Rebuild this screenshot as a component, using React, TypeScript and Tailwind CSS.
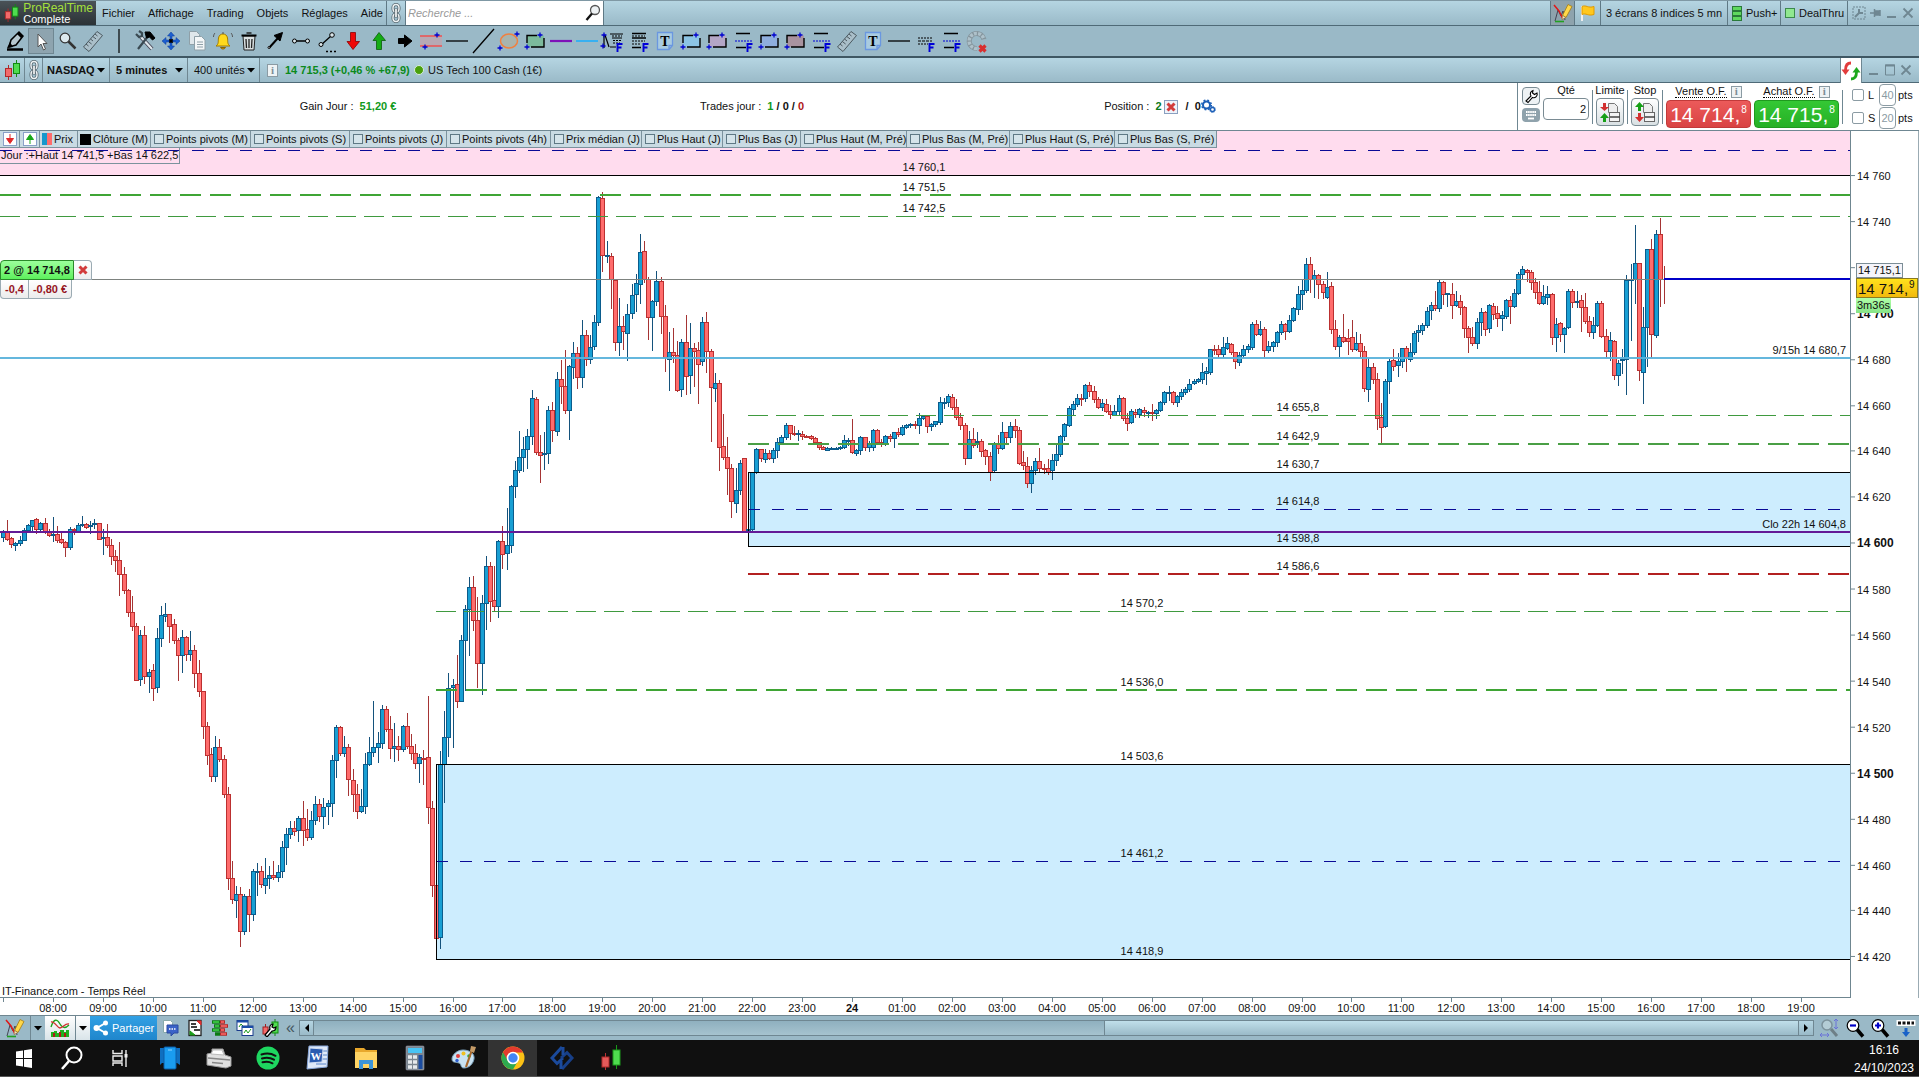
import React from "react";

type Kids = { children?: React.ReactNode };

/* ------------------------------------------------------------------ */
/* Market data: direction, body top/bottom, wick high/low (plot units) */
/* ------------------------------------------------------------------ */
const SERIES = `
u532,537,530,541 d532,539,520,540 d538,544,537,547 u543,545,542,550 u540,543,536,545 u530,540,528,540
u525,530,524,531 u520,526,520,530 d519,529,518,533 u523,529,522,530 d523,532,518,533 d532,535,529,536
u534,535,517,541 d534,540,526,542 d539,542,532,543 d542,547,541,556 u529,547,527,549 d529,530,528,534
u525,531,523,531 u524,525,516,526 d524,527,523,528 u525,526,521,533 u523,524,519,528 d523,539,523,539
u537,538,529,554 d537,545,524,547 d545,556,539,564 d556,560,550,571 d560,574,542,595 d574,590,567,593
d590,612,589,616 d612,626,596,630 d626,680,623,680 u635,679,630,685 d635,676,626,683 u672,676,669,692
d670,688,664,700 u638,687,628,692 u615,638,606,646 u614,616,603,621 d614,626,614,642 d624,640,619,643
d640,655,638,680 u637,655,630,672 d637,654,636,660 u650,654,631,660 d650,673,645,687 d673,691,660,696
d691,726,691,738 d726,755,722,764 d754,776,748,781 u747,776,736,781 d747,759,739,761 d759,794,755,797
d794,878,787,889 d878,899,861,903 u894,900,886,917 d894,931,887,946 u896,931,894,934 d896,914,889,931
u871,914,869,920 u871,872,863,895 d871,884,866,887 u878,885,858,893 u875,878,866,888 d875,877,861,879
u872,877,865,881 u847,871,841,877 u834,847,828,864 u828,834,821,838 d828,831,821,835 u818,830,816,841
d818,830,801,845 d829,837,809,840 u820,837,811,839 u804,820,796,824 d804,816,799,821 u807,816,798,828
u803,806,800,824 u760,803,755,816 u727,760,725,777 d727,753,726,755 u747,753,736,756 d747,779,744,795
d780,794,769,811 d794,811,784,818 u806,811,789,812 u764,806,753,813 u752,764,737,765 u747,752,701,756
u743,747,732,762 u709,743,705,748 d709,729,706,731 d729,748,716,758 u746,748,723,761 d746,749,736,760
u726,749,725,751 d726,746,713,748 d746,753,734,759 d753,763,744,768 u757,763,754,782 d758,759,750,784
d757,807,696,823 d808,885,801,896 d885,938,885,938 u764,937,751,948 u737,764,711,802 u688,737,673,756
u685,687,679,747 d684,701,655,707 u640,701,635,701 u609,640,605,690 u587,609,577,655 d587,620,576,630
d620,663,597,687 u603,663,595,694 u566,603,556,629 d566,601,562,621 d600,606,566,611 u541,606,540,617
d541,554,526,568 u545,553,508,569 u486,545,485,552 u470,486,461,497 u457,470,431,472 u449,457,437,471
u436,449,429,468 u398,436,390,444 d399,452,397,454 d452,455,435,482 u453,454,432,469 u410,453,406,463
d410,430,402,441 u379,431,372,435 d379,386,360,403 d386,410,350,413 u366,410,365,439 u353,367,342,378
d353,377,347,388 u335,377,320,387 d335,359,330,365 u347,359,335,363 u322,346,315,349 u197,322,196,325
d198,255,192,271 u255,256,241,262 d256,279,253,308 d280,342,280,350 u326,342,298,355 d326,331,316,349
u314,333,304,360 u295,313,284,318 u283,294,274,311 u252,284,234,303 d251,279,241,282 d279,317,277,339
u301,317,300,350 u281,301,271,305 d281,316,277,333 d316,357,305,371 u352,359,332,390 d352,355,328,362
d355,390,341,391 u342,389,339,396 d342,376,315,394 u348,375,323,393 d348,351,343,386 d350,364,342,403
u322,361,317,365 d322,351,312,372 d351,387,349,441 u383,388,373,401 d383,447,380,470 d446,457,414,459
d457,468,437,494 d468,501,464,517 u490,503,468,512 u463,490,460,494 d458,531,458,531 u529,530,529,531
u472,529,472,531 u449,472,448,473 d449,458,449,461 u453,459,449,462 d453,458,450,459 u450,458,448,462
u442,450,438,457 u437,442,435,444 u425,437,423,439 d425,433,425,439 d433,434,426,435 u433,434,430,440
d434,436,431,439 d436,437,435,437 d436,438,435,439 d438,442,437,443 d442,447,442,449 d447,449,446,449
u448,450,447,450 u448,449,447,449 u448,449,447,449 u447,448,446,449 u440,447,435,448 u440,441,438,445
d440,452,419,453 u450,453,449,455 u437,450,436,454 d437,447,437,450 u443,447,441,451 u430,447,429,450
d430,442,429,444 d442,444,439,446 u436,444,435,445 d436,438,434,441 u432,438,432,447 d432,434,428,436
u427,434,425,435 u425,427,424,428 u424,425,423,427 d424,425,421,428 u418,425,413,433 u416,418,415,419
d416,426,415,432 u424,426,423,430 u421,424,421,426 u402,422,397,424 u402,403,398,408 u396,402,394,406
d397,407,394,409 d407,417,399,419 d417,425,413,429 d425,458,423,464 u439,458,431,458 d439,445,428,447
u441,442,432,447 d441,451,439,456 d450,456,449,464 d456,472,452,480 u444,470,442,472 d443,448,435,453
u432,448,422,449 d432,437,432,444 u426,437,422,442 d426,430,419,437 d430,463,427,464 d462,465,451,469
d466,483,457,487 u470,483,466,492 u461,470,458,474 d461,468,448,472 d468,469,464,473 d468,472,459,474
u460,470,454,479 u454,460,443,465 u436,454,435,456 u424,436,423,440 u408,425,406,426 u404,409,401,415
u398,404,394,406 d398,399,394,405 u385,398,384,401 d385,391,382,396 d391,399,386,402 d399,407,397,408
u403,407,399,410 d404,411,399,412 d411,414,405,418 u411,415,405,415 u398,411,395,414 d398,418,397,420
d418,423,413,430 u411,422,409,423 d412,414,409,417 u409,414,408,417 d410,412,407,416 u412,413,411,417
d412,413,404,420 u410,413,409,418 u402,410,401,411 u392,402,391,404 u392,393,386,400 d392,402,391,404
u396,402,395,406 u392,396,389,399 u389,392,387,394 u384,389,379,391 u381,383,379,384 u379,381,378,382
u372,379,363,383 u371,373,367,384 u349,372,349,374 d349,350,345,354 d349,354,345,357 u347,354,337,357
u343,348,337,349 d344,352,343,354 d352,361,352,368 u355,362,352,365 u349,355,345,357 u346,349,344,352
u324,347,322,349 d324,334,320,335 u329,334,321,335 d329,350,327,357 u346,350,341,352 u342,346,341,351
u332,342,331,346 u324,332,321,334 d324,331,323,339 u320,331,315,332 u308,320,307,321 u294,309,286,314
u290,294,279,309 u264,290,258,292 d264,279,257,292 u275,279,270,297 d275,284,274,298 d284,292,281,298
u287,297,272,298 d286,329,282,333 d329,346,320,349 u337,346,335,356 d337,341,314,342 d338,341,329,354
d337,349,320,351 u343,349,332,350 d343,351,334,357 d351,388,346,391 u367,389,358,401 d367,379,363,383
d379,418,373,429 d417,427,403,444 u381,426,379,427 u361,381,359,393 d360,366,349,370 u361,365,353,376
u348,361,348,367 d348,358,346,371 u352,359,343,361 u333,352,331,354 u330,332,325,341 u325,330,323,334
u311,325,307,327 u305,310,302,319 d305,308,291,310 u282,308,280,311 d282,294,281,304 u293,294,293,306
d294,305,283,318 u301,305,291,306 d301,307,295,314 d307,328,306,337 d328,337,326,352 d337,343,327,345
u322,343,318,348 u312,322,308,335 d312,329,311,335 u305,328,304,332 d306,314,303,319 d313,318,306,326
u315,318,311,330 u300,316,299,318 d300,306,296,323 u293,306,289,307 u274,293,272,294 u269,274,266,279
d270,272,269,281 d272,282,270,289 d282,292,278,298 d292,303,281,304 u296,303,285,304 u294,297,286,304
d294,337,293,344 u324,337,318,351 d323,334,322,341 u328,334,327,352 u291,327,289,328 d291,302,289,307
u301,302,291,307 d300,307,295,331 d307,321,293,323 d321,332,316,336 u325,332,317,338 u303,325,301,326
d303,336,301,337 d336,351,329,357 u340,351,332,360 d341,375,340,379 u363,375,360,385 u359,360,349,373
u280,359,275,394 u279,280,264,340 u263,279,225,303 d263,370,263,380 u327,372,307,403 u249,327,249,366
d249,334,239,357 u234,335,230,337 d234,279,218,306 d279,279,266,303
`;

const CANDLES = SERIES.trim()
  .split(/\s+/)
  .map((item, i) => {
    const [top, bottom, high, low] = item.slice(1).split(",").map(Number);
    return { up: item[0] === "u", x: Math.round(2.9 + i * 4.163), top, bottom, high, low };
  });

/* -------------------------------- Chart -------------------------------- */
function Level(p: { x: number; y: number; color: string; w?: number; dash?: string; opacity?: number; x2?: number }) {
  const w = p.w ?? 1;
  return (
    <line x1={p.x} x2={p.x2 ?? 1850} y1={p.y + w / 2} y2={p.y + w / 2} stroke={p.color} strokeWidth={w} strokeDasharray={p.dash} opacity={p.opacity} />
  );
}

const LABELS: [string, number, number][] = [
  ["14 760,1", 924, 171], ["14 751,5", 924, 191], ["14 742,5", 924, 212],
  ["14 655,8", 1298, 411], ["14 642,9", 1298, 440], ["14 630,7", 1298, 468],
  ["14 614,8", 1298, 505], ["14 598,8", 1298, 542], ["14 586,6", 1298, 570],
  ["14 570,2", 1142, 607], ["14 536,0", 1142, 686], ["14 503,6", 1142, 760],
  ["14 461,2", 1142, 857], ["14 418,9", 1142, 955],
];

function PriceChart() {
  return (
    <svg className="block h-full w-full" viewBox="0 148 1850 849" preserveAspectRatio="none" role="img" aria-label="NASDAQ 5 minutes">
      <g shapeRendering="crispEdges">
        <rect x="0" y="148" width="1850" height="27" fill="#ffdcee" />
        <rect x="748" y="472" width="1102" height="74" fill="#cdedfe" />
        <rect x="436" y="764" width="1414" height="195" fill="#cdedfe" />
        {CANDLES.map((c, i) => (
          <g key={i} fill={c.up ? "#14527c" : "#a53434"}>
            <rect x={c.x} y={c.high} width="1" height={c.low - c.high + 1} />
            <rect x={c.x - 2} y={c.top} width="5" height={Math.max(1, c.bottom - c.top + 1)} fill={c.up ? "#0b5c8c" : "#bb3030"} />
            {c.bottom - c.top > 1 && (
              <rect x={c.x - 1} y={c.top + 1} width="3" height={c.bottom - c.top - 1} fill={c.up ? "#189fd3" : "#ff6c6c"} />
            )}
          </g>
        ))}
        <Level x={0} y={150} color="#0a0a96" dash="12 12" />
        <Level x={0} y={175} color="#000" />
        <Level x={0} y={194} color="#3fa535" w={2} dash="21 9" />
        <Level x={0} y={216} color="#3f9a3f" dash="20 8" />
        <Level x={748} y={415} color="#3f9a3f" dash="20 8" />
        <Level x={748} y={443} color="#4a9f45" w={2} dash="21 9" />
        <Level x={748} y={509} color="#0a0a96" dash="12 12" />
        <Level x={748} y={573} color="#b32020" w={2} dash="21 9" />
        <Level x={436} y={611} color="#3f9a3f" dash="20 8" />
        <Level x={436} y={689} color="#3fa535" w={2} dash="21 9" />
        <Level x={436} y={861} color="#0a0a96" dash="12 12" />
        <path d="M1850 472.5H748.5V546.5H1850M1850 764.5H436.5V959.5H1850" fill="none" stroke="#000" />
        <Level x={0} y={279} color="#7d827f" />
        <Level x={0} y={357} color="#5cb4dc" w={2} opacity={0.95} />
        <Level x={0} y={531} color="#631a96" w={2} />
        <Level x={1664} y={278} color="#0000c8" w={2} />
      </g>
      <g fontSize="11" fontFamily="'Liberation Sans', Arial, sans-serif" fill="#111">
        {LABELS.map(([t, x, y]) => (
          <text key={t} x={x} y={y} textAnchor="middle">{t}</text>
        ))}
        <text x="1846" y="354" textAnchor="end">9/15h 14 680,7</text>
        <text x="1846" y="528" textAnchor="end">Clo 22h 14 604,8</text>
        <text x="2" y="995">IT-Finance.com - Temps Réel</text>
      </g>
    </svg>
  );
}

function PriceAxis() {
  return (
    <svg className="block h-full w-full" viewBox="0 131 67 866" preserveAspectRatio="none" role="img" aria-label="Prix">
      <g fontFamily="'Liberation Sans', Arial, sans-serif" fontSize="11" fill="#111">
        {Array.from({ length: 18 }, (_, k) => {
          const price = 760 - k * 20;
          const y = Math.round(175 + k * 45.9);
          const bold = price % 100 === 0;
          return (
            <g key={price}>
              <rect x="0" y={y} width="4" height="1" fill="#6f8690" />
              {price !== 720 && (
                <text x="6" y={y + 5} fontWeight={bold ? 700 : 400} fontSize={bold ? 12 : 11}>{`14 ${price}`}</text>
              )}
            </g>
          );
        })}
      </g>
    </svg>
  );
}

const TIMES = Array.from({ length: 36 }, (_, i) => {
  const h = (8 + i) % 24;
  return h === 0 ? "24" : `${String(h).padStart(2, "0")}:00`;
});

function TimeAxis() {
  return (
    <div className="h-[18px] shrink-0 border-b border-[#6f8690] bg-white">
      <svg className="block h-full w-full" viewBox="0 0 1919 17" preserveAspectRatio="none" role="img" aria-label="Heures">
        <rect x="3" width="1" height="4" fill="#6f8690" />
        {TIMES.map((t, i) => {
          const x = Math.round(53 + i * 49.94);
          return (
            <g key={i}>
              <rect x={x} width="1" height="4" fill="#6f8690" />
              <text x={x} y="14" textAnchor="middle" fontSize="11" fontWeight={t === "24" ? 700 : 400} fontFamily="'Liberation Sans', Arial, sans-serif" fill="#111">{t}</text>
            </g>
          );
        })}
      </svg>
    </div>
  );
}

/* -------------------------------- Icons -------------------------------- */
function I({ children, s = 26 }: Kids & { s?: number }) {
  return (
    <svg width={s} height={s} viewBox={`0 0 ${s} ${s}`} fill="none" stroke="#000" aria-hidden="true" className="block shrink-0">
      {children}
    </svg>
  );
}
const Chain = () => (
  <svg width="12" height="20" viewBox="0 0 12 20" fill="none" aria-hidden="true">
    {[1.5, 11].map((y) => (
      <g key={y}>
        <rect x="3" y={y} width="6" height="7.5" rx="3" stroke="#56666e" strokeWidth="3" />
        <rect x="3" y={y} width="6" height="7.5" rx="3" stroke="#eef3f5" strokeWidth="1.400" />
      </g>
    ))}
    <path d="M6 5.500v9" stroke="#56666e" strokeWidth="3.400" />
    <path d="M6 6v8" stroke="#fff" strokeWidth="1.600" />
  </svg>
);
const CandlePair = ({ h = 20 }: { h?: number }) => (
  <svg width={h * 0.85} height={h} viewBox="0 0 17 20" aria-hidden="true">
    <path d="M4.500 5v15" stroke="#b02a2a" />
    <rect x="1.500" y="8.500" width="6" height="8" fill="#f26a6a" stroke="#b02a2a" />
    <path d="M12.500 0v17" stroke="#138a13" />
    <rect x="9.500" y="3.500" width="6" height="10" fill="#4fdc4f" stroke="#138a13" />
  </svg>
);
const EditChart = () => (
  <I s={20}>
    <path d="M2 18L5 7l3 6 2-5 2 9" stroke="#445" />
    <path d="M1 2l5 6 4 8" stroke="#e01818" strokeWidth="1.500" />
    <path d="M2 18.500h9" stroke="#22a022" strokeWidth="1.600" />
    <path d="M9.500 12.500L15 1.500l4 2-6 11z" fill="#ffd84a" stroke="#a37a10" strokeWidth=".8" />
    <path d="M9 16.500l.5-4 3.500 2z" fill="#f6e2b8" stroke="#7a5a20" strokeWidth=".5" />
  </I>
);
const Plus = ({ x, y }: { x: number; y: number }) => <path d={`M${x - 2.5} ${y}h5M${x} ${y - 2.5}v5`} stroke="#0000d0" strokeWidth="1.300" />;
const BoxTool = ({ fill }: { fill: string }) => (
  <I>
    <rect x="5" y="7.500" width="17" height="11.500" fill={fill} stroke="none" />
    <path d="M5 15V7.500h10M9 19h13V10" strokeWidth="1.400" />
    <Plus x={18} y={7} />
    <Plus x={5} y={19} />
  </I>
);
const F = () => <path d="M17.500 24v-8h5M17.500 19.500h4" stroke="#0000d8" strokeWidth="1.900" />;
const FibTool = () => (
  <I>
    <path d="M6 5.500h14M6 19.500h10" strokeWidth="1.500" />
    <path d="M5 13h17" stroke="#0000d8" strokeDasharray="2 1" />
    <F />
  </I>
);
const RulerIcon = () => (
  <I>
    <path d="M3.500 19L17 3.500l5.500 4L9 23.500z" fill="#b9c6cc" fillOpacity=".5" stroke="#4c5a61" />
    <path d="M6 16l2.500 2M8.300 13.500l3.300 2.500M10.500 11l2.500 2M12.800 8.500l3.200 2.400M15 6l2.500 2" stroke="#4c5a61" />
  </I>
);
const TextTool = () => (
  <I>
    <path d="M5.500 4.500h15v13l-3.500 4H5.500zM17 21.500v-4h3.500" fill="#a9cbe0" stroke="#6a97e0" strokeWidth="1.300" />
    <text x="13" y="18" textAnchor="middle" fontSize="14" fontWeight="700" fontFamily="'Liberation Serif', serif" fill="#000" stroke="none">T</text>
  </I>
);
const HLine = ({ c = "#000", w = 1.3 }: { c?: string; w?: number }) => <I><path d="M2 13h22" stroke={c} strokeWidth={w} /></I>;

const TOOLS: [string, React.ReactNode][] = [
  ["Dessiner", <I key="0"><path d="M7 19l2-7 8-8 4 4-7 9-7 2z" fill="#b7c8cf" strokeWidth="1.500" /><path d="M16 5l4 4" strokeWidth="3" /><path d="M5 21.500h16" strokeWidth="2.500" /><path d="M5 20l3-6 3 5z" fill="#000" stroke="none" /></I>],
  ["Sélection", <I key="1"><path d="M10 6v13l3-3 2.500 6 2-1-2.500-5.500h4z" fill="#fff" stroke="#555" /></I>],
  ["Loupe", <I key="2"><circle cx="11" cy="10" r="4.800" fill="#dce9ee" stroke="#333" strokeWidth="1.200" /><path d="M14.500 13.500l7 7" stroke="#333" strokeWidth="2.500" /></I>],
  ["Règle", <RulerIcon key="3" />],
  ["Séparateur", <I key="4"><path d="M13 1v24" strokeWidth="1.200" /></I>],
  ["Outils", <I key="5"><path d="M8 8l12 13" stroke="#445" strokeWidth="4" /><path d="M8 8l12 13" stroke="#dfe8ec" strokeWidth="2.200" /><path d="M4 6l3 3 3-1 0-3-3-2M17 7L6 21" stroke="#3a4a52" strokeWidth="2.200" /><path d="M13 4l5 0 5 6-2.500 2-3-3-3 1z" fill="#000" /></I>],
  ["Déplacer", <I key="6"><circle cx="13" cy="13" r="2" fill="#000" /><path d="M13 4l3.500 4H14v3h-2V8H9.500zM13 22l3.500-4H14v-3h-2v3H9.500zM4 13l4-3.500V12h3v2H8v2.500zM22 13l-4-3.500V12h-3v2h3v2.500z" fill="#1c5fd0" stroke="#0a3a98" strokeWidth=".5" /></I>],
  ["Copier", <I key="7"><path d="M5.500 3.500h7l3 3v10h-10z" fill="#dfe7eb" stroke="#8fa0a8" /><path d="M10.500 8.500h7l3.500 3.500v10H10.500z" fill="#f4f7f8" stroke="#8fa0a8" /><path d="M13 14h6M13 16.500h6M13 19h6" stroke="#8fa0a8" /></I>],
  ["Alerte", <I key="8"><path d="M6 18c3-2 2-5 2.500-8 .5-3 2.500-4 4.500-4s4 1 4.500 4c.5 3-.5 6 2.500 8z" fill="#ffd91c" stroke="#a27b00" /><path d="M10.500 19.500c1 2 4 2 5 0z" fill="#d89c00" stroke="#8a6500" /><path d="M13 4v2M5 5c-1 1-1.500 2.500-1.500 4M21 5c1 1 1.500 2.500 1.500 4" stroke="#555" /></I>],
  ["Supprimer", <I key="9"><path d="M7 8h12l-1 14H8z" fill="#d8dedf" stroke="#222" /><path d="M5.500 7.500h15" strokeWidth="2" /><path d="M10.500 5h5M10 11l.5 9M13 11v9M16 11l-.5 9" stroke="#222" strokeWidth="1.300" /></I>],
  ["Flèche", <I key="10"><path d="M7 20l9-10" strokeWidth="2" /><path d="M20.500 4.500l-8.500 3 6 5.500z" fill="#000" /><circle cx="7" cy="19.500" r="1" fill="#fff" /></I>],
  ["Segment", <I key="11"><path d="M8 13h10" strokeWidth="1.500" /><circle cx="6.500" cy="13" r="2" fill="#dde8ec" /><circle cx="19.500" cy="13" r="2" fill="#dde8ec" /></I>],
  ["Prolongement", <I key="12"><path d="M7 17l10-9" strokeWidth="1.300" /><circle cx="18" cy="7" r="2.300" fill="#dde8ec" /><circle cx="7" cy="16.500" r="2" fill="#dde8ec" /><path d="M12 23.500h12" strokeDasharray="2 2" strokeWidth="1.500" /></I>],
  ["Flèche baissière", <I key="13"><path d="M10.500 4.500h5v9h4L13 21.500 7 13.500h3.500z" fill="#f00808" stroke="#8c0000" strokeWidth=".8" /></I>],
  ["Flèche haussière", <I key="14"><path d="M10.500 21.500h5v-9h4L13 4.500l-6 8h3.500z" fill="#14ac14" stroke="#0a5c0a" strokeWidth=".8" /></I>],
  ["Flèche droite", <I key="15"><path d="M6.500 10.500h6V7l7.500 6-7.500 6v-3.500h-6z" fill="#000" /></I>],
  ["Canal", <I key="16"><rect x="2" y="8" width="22" height="10" fill="#b7a9b4" stroke="none" /><path d="M2 8h22M2 18h22" stroke="#f05050" strokeWidth="1.300" /><Plus x={19} y={7} /><Plus x={7} y={19} /></I>],
  ["Horizontale", <HLine key="17" />],
  ["Droite", <I key="18"><path d="M3 25L24 1" strokeWidth="1.400" /></I>],
  ["Ellipse", <I key="19"><ellipse cx="13" cy="13" rx="8.500" ry="7" fill="#a8b4ae" stroke="#f08040" strokeWidth="1.500" /><Plus x={21} y={6} /><Plus x={4} y={20} /></I>],
  ["Rectangle vert", <BoxTool key="20" fill="#7cba9c" />],
  ["Clôture", <HLine key="21" c="#7d12b8" w={2.2} />],
  ["Ligne 9/15h", <HLine key="22" c="#38b0f0" w={2} />],
  ["Extension Fibonacci", <I key="23"><path d="M4 20V7M5 7l4 12M10 6h13M12 10h10M10 19h6" strokeWidth="1.200" /><path d="M12 8h10M13 12.500h9M13 15h7" strokeDasharray="2 1" /><Plus x={4} y={7} /><Plus x={3} y={18} /><F /></I>],
  ["Retracement Fibonacci", <I key="24"><path d="M6 5.500h14M6 10h14M6 19.500h9" strokeWidth="1.300" /><path d="M6 8h13M6 13h13M6 16h9" strokeDasharray="2 1" /><F /></I>],
  ["Texte", <TextTool key="25" />],
  ["Rectangle bleu", <BoxTool key="26" fill="#8cc4e4" />],
  ["Rectangle violet", <BoxTool key="27" fill="#b4a6c6" />],
  ["Niveaux", <FibTool key="28" />],
  ["Rectangle indigo", <BoxTool key="29" fill="#8faede" />],
  ["Rectangle brun", <BoxTool key="30" fill="#a9939f" />],
  ["Niveaux 2", <FibTool key="31" />],
  ["Mesure", <RulerIcon key="32" />],
  ["Texte 2", <TextTool key="33" />],
  ["Horizontale 2", <HLine key="34" />],
  ["Niveaux 3", <I key="35"><path d="M6 10h14M6 16h10" strokeDasharray="2 1" strokeWidth="1.200" /><path d="M6 13h14" strokeDasharray="3 1" /><F /></I>],
  ["Niveaux 4", <FibTool key="36" />],
  ["Effacer les objets", <I key="37"><path d="M13 20.500a7.500 7.500 0 1 1 7-9" stroke="#84949c" strokeWidth="5" /><path d="M13 20.500a7.500 7.500 0 1 1 7-9" stroke="#aec1ca" strokeWidth="3.500" strokeDasharray="3 1.200" /><path d="M15.500 17.500l6 6M21.500 17.500l-6 6" stroke="#d83030" strokeWidth="3.200" /></I>],
];

const Caret = () => (
  <svg width="8" height="5" viewBox="0 0 8 5" aria-hidden="true" className="shrink-0"><path d="M0 0h8L4 4.500z" fill="#000" /></svg>
);
const InfoMark = ({ c = "h-[13px] w-[11px]" }: { c?: string }) => (
  <span className={`${c} flex items-center justify-center border border-[#8b9ba3] bg-[#eef3f5] font-['Liberation_Serif',serif] text-[11px] font-bold leading-none text-[#7d8d95]`}>i</span>
);
const RedX = () => (
  <svg width="10" height="10" viewBox="0 0 10 10" aria-hidden="true"><path d="M1.500 1.500l7 7M8.500 1.500l-7 7" stroke="#d23c3c" strokeWidth="3" /></svg>
);

/* ------------------------------- Top bars ------------------------------ */
const barGrad = "bg-linear-to-b from-[#b5d5e2] to-[#9abac8]";

function MenuBar() {
  return (
    <header className={`flex h-[26px] shrink-0 items-stretch border-b border-[#4f6a77] border-t border-t-[#7f98a4] ${barGrad}`}>
      <div className="flex w-24 items-center gap-1 bg-linear-to-b from-[#4a5257] to-[#2b3236] pl-1">
        <CandlePair h={18} />
        <div className="leading-none">
          <div className="text-xs leading-[12px] text-[#a4e03c]">ProRealTime</div>
          <div className="text-[11px] leading-[11px] text-white">Complete</div>
        </div>
      </div>
      <nav className="flex w-[291px] items-center gap-[13px] border-r border-[#5f7985] pl-1.5">
        {["Fichier", "Affichage", "Trading", "Objets", "Réglages", "Aide"].map((m) => (
          <button key={m} type="button">{m}</button>
        ))}
      </nav>
      <button type="button" aria-label="Lier" className="flex w-[18px] items-center justify-center"><Chain /></button>
      <label className="flex w-[199px] items-center border-x border-[#5f7985] bg-white pr-0.5">
        <input type="search" aria-label="Recherche" placeholder="Recherche ..." className="w-full min-w-0 bg-transparent pl-0.5 italic outline-none placeholder:text-[#9a9a9a]" />
        <svg width="16" height="18" viewBox="0 0 16 18" fill="none" aria-hidden="true" className="shrink-0">
          <circle cx="10" cy="6" r="4.500" fill="#eef2f4" stroke="#555" strokeWidth="1.300" />
          <path d="M7 9.500L1.500 16" stroke="#111" strokeWidth="2.300" />
        </svg>
      </label>
      <div className="ml-auto flex items-stretch">
        <button type="button" aria-label="Dessin" className="flex w-[25px] items-center justify-center border-x border-[#5f7985] bg-[#8ea3ad]"><EditChart /></button>
        <button type="button" aria-label="Drapeau" className="flex w-[26px] items-center justify-center border-r border-[#5f7985]">
          <I s={18}><path d="M3 2v15" stroke="#eee" strokeWidth="2" /><path d="M3 2.500c4-2 6 2 12 0v8c-6 2-8-2-12 0z" fill="#ffc81e" stroke="#e09a00" /></I>
        </button>
        <button type="button" className="w-[127px] border-r border-[#5f7985]">3 écrans 8 indices 5 mn</button>
        <button type="button" className="flex w-[53px] items-center gap-1 border-r border-[#5f7985] pl-1">
          <span className="flex w-2.5 flex-col">
            {[0, 1, 2].map((k) => <span key={k} className="h-[5px] border border-[#2a7a3a] bg-[#5fd85f]" />)}
          </span>
          Push+
        </button>
        <button type="button" className="flex w-[67px] items-center gap-1 border-r border-[#5f7985] pl-1">
          <span className="size-2.5 border border-[#3c8a4c] bg-[#90e890]" />DealThru
        </button>
        <div className="flex w-[71px] items-center gap-1 pl-1 text-[#6f8792]">
          <button type="button" aria-label="Options"><I s={14}><rect x="1" y="1" width="12" height="12" stroke="#6f8792" strokeDasharray="2 1" /><path d="M3 11l5-5M7 3v4h4" stroke="#6f8792" strokeWidth="2" /></I></button>
          <button type="button" aria-label="Épingler"><I s={12}><path d="M0 6h4M4.500 2v8M5 4h4v4H5zM10 3v6" stroke="#6f8792" strokeWidth="1.500" fill="#6f8792" /></I></button>
          <WinMin /><WinX />
        </div>
      </div>
    </header>
  );
}
const WinMin = () => <button type="button" aria-label="Réduire"><I s={12}><path d="M1 10h9" stroke="#6f8792" strokeWidth="2" /></I></button>;
const WinX = () => <button type="button" aria-label="Fermer"><I s={12}><path d="M1.500 1.500l9 9M10.500 1.500l-9 9" stroke="#6f8792" strokeWidth="1.800" /></I></button>;

function ToolBar() {
  return (
    <div role="toolbar" aria-label="Outils de dessin" className="flex h-8 shrink-0 items-center border-b-2 border-[#3f5763] bg-[#9ab9c7] pl-0.5">
      {TOOLS.map(([name, icon]) => (
        <button key={name} type="button" title={name} className={name === "Sélection" ? "border border-[#6f8792] bg-[#8ea4af]" : "border border-transparent"}>
          <span className="-m-px block">{icon}</span>
        </button>
      ))}
    </div>
  );
}

function SymbolBar() {
  return (
    <div className={`flex h-[25px] shrink-0 items-stretch border-b border-[#4f6a77] ${barGrad}`}>
      <button type="button" aria-label="Style" className="flex w-[25px] items-center justify-center border-r border-[#6f8792]"><CandlePair /></button>
      <button type="button" aria-label="Lier" className="flex w-[18px] items-center justify-center border-r border-[#6f8792]"><Chain /></button>
      <button type="button" className="flex w-[67px] items-center justify-between border-r border-[#6f8792] px-1 font-bold">NASDAQ<Caret /></button>
      <button type="button" className="flex w-[78px] items-center justify-between border-r border-[#6f8792] pl-1.5 pr-1 font-bold">5 minutes<Caret /></button>
      <button type="button" className="flex w-[72px] items-center justify-between border-r border-[#6f8792] pl-1.5 pr-1">400 unités<Caret /></button>
      <div className="flex items-center pl-[7px]">
        <InfoMark />
        <span className="w-[136px] whitespace-nowrap pl-[7px] font-bold text-[#0b8a1b]">14 715,3 (+0,46 % +67,9)</span>
        <span className="size-2.5 rounded-full border border-[#d9eedd] bg-[#4aa00c]" />
      </div>
      <span className="self-center pl-1">US Tech 100 Cash (1€)</span>
      <div className="ml-auto flex items-stretch">
        <button type="button" aria-label="Inverser" className="-mb-px flex w-[22px] items-center justify-center border-x border-[#6f8792] bg-white">
          <I s={20}><path d="M10 2C6 2 4.500 5 4.500 9" stroke="#e23c3c" strokeWidth="2.800" /><path d="M.5 8.500h8L4.500 14z" fill="#e23c3c" stroke="none" /><path d="M10 18c4 0 5.500-3 5.500-7" stroke="#1ca81c" strokeWidth="2.800" /><path d="M11.500 11.500h8L15.500 6z" fill="#1ca81c" stroke="none" /></I>
        </button>
        <div className="flex w-[57px] items-center gap-1 pl-1.5">
          <WinMin />
          <button type="button" aria-label="Agrandir"><I s={12}><path d="M1.500 1v10h9V1z" stroke="#6f8792" /><path d="M1 1.500h10" stroke="#6f8792" strokeWidth="2" /></I></button>
          <WinX />
        </div>
      </div>
    </div>
  );
}

/* --------------------------- Trading info row -------------------------- */
const Sep = () => <div className="mx-[3px] h-[34px] w-px self-center bg-[#6f8792]" />;

function PriceButton({ label, value, tone }: { label: string; value: string; tone: string }) {
  return (
    <div className="mr-[3px] flex w-[85px] flex-col items-center last:mr-0">
      <div className="flex h-[17px] items-center gap-1 leading-none">
        <span className="whitespace-nowrap border-b border-dotted border-black leading-[12px]">{label}</span><InfoMark c="h-3 w-[11px]" />
      </div>
      <button type="button" className={`flex h-7 w-full items-center justify-center gap-px whitespace-nowrap rounded-sm border text-[21px] leading-none text-white ${tone}`}>
        {value}<span className="pb-2 text-[10px] leading-none">8</span>
      </button>
    </div>
  );
}

function OrderType({ label, first, second }: { label: string; first: string; second: string }) {
  return (
    <div className="flex w-7 flex-col items-center">
      <span className="h-[15px] leading-[14px]">{label}</span>
      <button type="button" aria-label={`Ordre ${label}`} className="flex h-7 w-full items-center justify-center rounded-sm border border-[#7a8b93] bg-linear-to-b from-white to-[#d9e0e3]">
        <I s={24}>
          <path d="M10.500 3.500h6l3 3v6h-9z" fill="#eee" stroke="#777" />
          <rect x="11.500" y="12.500" width="10" height="9" fill="#f4f4f4" stroke="#666" /><path d="M12 17h10" stroke="#444" strokeWidth="1.500" />
          <path d={first === "#d23030" ? "M5 3h3v4h3l-4.500 4L2 7h3z" : "M5 11h3V7h3L6.500 2 2 7h3z"} fill={first} stroke="none" />
          <path d={first === "#d23030" ? "M5 22h3v-4h3l-4.500-5L2 18h3z" : "M5 13h3v4h3l-4.500 5L2 17h3z"} fill={second} stroke="none" />
        </I>
      </button>
    </div>
  );
}

function TradeRow() {
  return (
    <section className="flex h-12 shrink-0 border-b border-[#6f8792] bg-white">
      <div className="grid flex-1 grid-cols-3 items-center pl-[146px] pr-[159px]">
        <p className="text-center">Gain Jour :&nbsp; <b className="text-[#109a20]">51,20 €</b></p>
        <p className="text-center">Trades jour : <b className="text-[#109a20]">&nbsp;1</b><b> / 0 / </b><b className="text-[#b01818]">0</b></p>
        <div className="flex items-center justify-center pl-2">
          Position : <b className="pl-1.5 text-[#0b7a1b]">2</b>
          <button type="button" aria-label="Clôturer" className="ml-0.5 border border-[#8aa0c0] bg-[#eef2fa] p-px"><RedX /></button>
          <b className="pl-2">/ &nbsp;0</b>
          <button type="button" aria-label="Réglages">
            <I s={15}><circle cx="5.500" cy="6" r="3.500" stroke="#1b5fb8" strokeWidth="2" /><circle cx="5.500" cy="6" r="4.800" stroke="#1b5fb8" strokeWidth="1.500" strokeDasharray="1.900 1.900" /><circle cx="11.500" cy="10.500" r="2" stroke="#1b5fb8" strokeWidth="1.300" /><circle cx="11.500" cy="10.500" r="3" stroke="#1b5fb8" strokeDasharray="1.200 1.100" /></I>
          </button>
        </div>
      </div>
      <div className="flex w-[402px] border-l border-[#6f8792] pl-1">
        <div className="flex w-[18px] flex-col gap-[3px] pt-1">
          <button type="button" aria-label="Paramètres" className="flex h-[18px] items-center justify-center rounded-sm border border-[#7a8b93] bg-[#eef2f4]">
            <I s={16}><path d="M3 13l5-5a3.500 3.500 0 0 1 2-5.500L9.500 5l2 1.500L14 5a3.500 3.500 0 0 1-4.500 4.500L5 14.500z" fill="#fff" strokeWidth="1.100" /></I>
          </button>
          <button type="button" aria-label="Clavier" className="flex h-3.5 items-center justify-center rounded-sm bg-[#8fa2ac]">
            <I s={14}><path d="M2 4h10M2 7h10" stroke="#fff" strokeWidth="1.800" strokeDasharray="1.600 .5" /><path d="M4 10.500h6" stroke="#fff" strokeWidth="1.800" /></I>
          </button>
        </div>
        <label className="ml-[3px] flex w-[46px] flex-col items-center">
          <span className="h-[15px] leading-[15px]">Qté</span>
          <input defaultValue="2" className="h-[22px] w-full rounded-sm border border-[#7a8b93] px-0.5 text-right outline-none" />
        </label>
        <Sep />
        <OrderType label="Limite" first="#d23030" second="#16a016" />
        <Sep />
        <OrderType label="Stop" first="#16a016" second="#d23030" />
        <Sep />
        <div className="flex">
          <PriceButton label="Vente O.F." value="14 714," tone="border-[#c23a3a] bg-linear-to-b from-[#ec5a5a] to-[#d94343]" />
          <PriceButton label="Achat O.F." value="14 715," tone="border-[#1f9a1f] bg-linear-to-b from-[#34c834] to-[#26b026]" />
        </div>
        <Sep />
        <div className="ml-1.5 flex flex-col gap-px pt-px">
          {[["L", "40"], ["S", "20"]].map(([k, v]) => (
            <div key={k} className="flex h-[22px] items-center">
              <label className="flex w-[27px] items-center gap-1">
                <input type="checkbox" className="size-3 appearance-none rounded-xs border border-[#8b9ba3] bg-white" />{k}
              </label>
              <input aria-label={`${k} points`} defaultValue={v} className="h-[22px] w-[17px] rounded-sm border border-[#8b9ba3] p-0 text-center text-[#8b9ba3] outline-none" />
              <span className="pl-0.5">pts</span>
            </div>
          ))}
        </div>
      </div>
    </section>
  );
}

/* ---------------------------- Indicator tabs --------------------------- */
const INDICATORS: [string, string][] = [
  ["Points pivots (M)", "w-[100px]"], ["Points pivots (S)", "w-[99px]"], ["Points pivots (J)", "w-[97px]"],
  ["Points pivots (4h)", "w-[104px]"], ["Prix médian (J)", "w-[91px]"], ["Plus Haut (J)", "w-[81px]"],
  ["Plus Bas (J)", "w-[78px]"], ["Plus Haut (M, Pré)", "w-[106px]"], ["Plus Bas (M, Pré)", "w-[103px]"],
  ["Plus Haut (S, Pré)", "w-[105px]"], ["Plus Bas (S, Pré)", "w-[102px]"],
];
const cell = "flex items-center whitespace-nowrap border-r border-b border-[#7b929d] bg-[#c9dbe3]";

function IndicatorBar() {
  return (
    <div className="flex h-[17px] shrink-0 items-stretch bg-[#ffdcee] leading-none">
      <button type="button" aria-label="Descendre" className={`${cell} w-5 justify-center`}>
        <I s={14}><rect x=".5" y=".5" width="13" height="13" fill="#fff" stroke="#8aa0c8" /><path d="M7 2v5M3.500 6.500h7L7 11.500z" fill="#e02828" stroke="#e02828" /></I>
      </button>
      <button type="button" aria-label="Monter" className={`${cell} w-5 justify-center`}>
        <I s={14}><rect x=".5" y=".5" width="13" height="13" fill="#fff" stroke="#8aa0c8" /><path d="M7 12V7M3.500 7.500h7L7 2.500z" fill="#18a818" stroke="#18a818" /></I>
      </button>
      <button type="button" className={`${cell} w-[38px] gap-0.5 pl-0.5`}>
        <span className="flex"><span className="h-3 w-[5px] bg-[#1698cc]" /><span className="h-3 w-[5px] bg-[#ff6c6c]" /></span>Prix
      </button>
      <button type="button" className={`${cell} w-[73px] gap-0.5 pl-0.5`}><span className="size-[11px] bg-black" />Clôture (M)</button>
      {INDICATORS.map(([name, w]) => (
        <label key={name} className={`${cell} ${w} gap-0.5 pl-[3px]`}>
          <input type="checkbox" className="size-2.5 shrink-0 appearance-none border border-[#5f7985] bg-[#d5e4ea]" />{name}
        </label>
      ))}
    </div>
  );
}

/* ------------------------------- Overlays ------------------------------ */
function PositionTag() {
  return (
    <div className="absolute left-0 top-[129px] font-bold leading-none">
      <div className="flex h-5">
        <button type="button" className="w-[74px] whitespace-nowrap rounded-tl-sm border border-[#2a8a2a] bg-linear-to-b from-[#9bff9b] to-[#5cf05c]">2 @ 14 714,8</button>
        <button type="button" aria-label="Fermer la position" className="flex w-[18px] items-center justify-center rounded-tr-sm border border-l-0 border-[#9babb3] bg-linear-to-b from-white to-[#eceeef]"><RedX /></button>
      </div>
      <div className="flex h-[19px] w-[72px] items-center rounded-b-sm border border-t-0 border-[#9babb3] bg-linear-to-b from-white to-[#ececec] text-[#96141e]">
        <span className="flex h-full w-7 items-center justify-center border-r border-[#9babb3]">-0,4</span>
        <span className="flex-1 whitespace-nowrap text-center">-0,80 €</span>
      </div>
    </div>
  );
}

function PriceTags() {
  return (
    <div className="absolute left-[5px] top-[132px] flex w-[62px] flex-col items-start leading-none">
      <div className="flex h-[15px] items-center whitespace-nowrap border border-[#7b8d96] bg-[#f4f4fa] px-px">14 715,1</div>
      <div className="flex h-5 w-full items-center gap-px whitespace-nowrap border border-[#8a7a20] bg-linear-to-b from-[#ffe21c] to-[#f2b90c] pl-px text-[15px] leading-none">
        14 714,<span className="pb-1.5 text-[10px] leading-none">9</span>
      </div>
      <div className="flex h-[15px] items-center bg-linear-to-b from-[#b0ffa8] to-[#86e486] px-px">3m36s</div>
    </div>
  );
}

/* ----------------------------- Bottom bars ----------------------------- */
function BottomBar() {
  const ib = "flex w-[25px] items-center justify-center";
  return (
    <div className="flex h-6 shrink-0 items-stretch bg-[#9ab9c7]">
      <button type="button" aria-label="Dessin" className="flex w-[31px] items-center justify-center border-r border-[#6f8792]"><EditChart /></button>
      <button type="button" aria-label="Menu dessin" className="flex w-[14px] items-center justify-center"><Caret /></button>
      <button type="button" aria-label="Indicateurs" className="flex w-[31px] items-center justify-center border-r border-[#6f8792] bg-linear-to-b from-white to-[#d9e4e9]">
        <I s={20}><path d="M1 9C4 0 7 1 10 6s6 4 9 1" stroke="#1ca01c" strokeWidth="1.300" /><path d="M1 4c4-1 6 6 9 6s5-5 9-4" stroke="#d23030" strokeWidth="1.300" /><path d="M1 19v-5h3v-1h3v2h3v-3h4v2h2v-2h3v7z" fill="#20b020" stroke="none" /><path d="M4 19v-4M10 19v-5M15 19v-4" stroke="#b01818" strokeWidth="2" /></I>
      </button>
      <button type="button" aria-label="Menu indicateurs" className="flex w-[14px] items-center justify-center bg-linear-to-b from-white to-[#d9e4e9]"><Caret /></button>
      <button type="button" className="flex w-[67px] items-center gap-[3px] bg-linear-to-b from-[#31a0e4] to-[#1f86cc] pl-[3px] text-white">
        <I s={16}><path d="M12.500 3L4 8l8.500 5" stroke="#fff" strokeWidth="2" /><circle cx="12.500" cy="3" r="2.500" fill="#fff" stroke="none" /><circle cx="3.500" cy="8" r="3" fill="#fff" stroke="none" /><circle cx="12.500" cy="13" r="2.500" fill="#fff" stroke="none" /></I>
        Partager
      </button>
      <button type="button" aria-label="Commentaires" className={ib}><I s={18}><path d="M2.500 1.500h7l2 2v10h-9z" fill="#fff" stroke="#8aa" /><path d="M6 6h11v8h-4l-3 3v-3H6z" fill="#3a62c8" stroke="#2a4aa0" /><path d="M8 10h7" stroke="#fff" strokeWidth="1.500" strokeDasharray="1.500 1" /></I></button>
      <button type="button" aria-label="Rapport" className={ib}><I s={18}><rect x="3" y="1.500" width="12" height="15" fill="#fff" stroke="#222" strokeWidth="1.300" /><path d="M11 2l4 4V2z" fill="#e03030" stroke="#e03030" /><path d="M5 5h5M5 8h6M8 11h6" strokeWidth="1.500" /><path d="M4 12l5 4H4z" fill="#1a9a1a" stroke="#1a9a1a" /></I></button>
      <button type="button" aria-label="Carnet d'ordres" className={ib}><I s={18}><path d="M1 3h8M3 7h6M1 11h8M4 15h5" stroke="#0c7a14" strokeWidth="3.500" /><path d="M9 3h5M9 7h8M9 11h5M9 15h7" stroke="#b02828" strokeWidth="3.500" /><path d="M2 3h6M4 7h4M2 11h6" stroke="#3fd84a" strokeWidth="1.500" /><path d="M10 3h3M10 7h6M10 11h3M10 15h5" stroke="#ff6a6a" strokeWidth="1.500" /></I></button>
      <button type="button" aria-label="Fenêtres" className={ib}><I s={18}><rect x="1" y="1.500" width="11" height="10" fill="#fff" stroke="#1a3c8c" /><path d="M1 2.500h11" stroke="#1a4ca8" strokeWidth="2" /><path d="M3 8l2-3 2 2" stroke="#1a9a1a" /><rect x="6" y="7" width="11" height="9.500" fill="#fff" stroke="#1a3c8c" /><path d="M6 8h11" stroke="#1a4ca8" strokeWidth="2" /><path d="M8 14l2-3 2 3 3-4" stroke="#1a9a1a" /></I></button>
      <button type="button" aria-label="Style" className={ib}><I s={18}><path d="M4.500 5v12" stroke="#a02020" /><rect x="2" y="8" width="5" height="7" fill="#f26a6a" stroke="#a02020" /><path d="M14 0v17" stroke="#138a13" /><rect x="11" y="3" width="6" height="11" fill="#4fdc4f" stroke="#138a13" /><path d="M4 16l5-6c-1-3 1-5 3-5l-1 3 2 1 2-1c0 3-2 4-4 4l-5 6z" fill="#fff" strokeWidth="1.200" /></I></button>
      <button type="button" className="w-[17px] text-base leading-5 text-[#45575f]">«</button>
      <div className="my-1 flex flex-1 items-stretch border border-[#6f8792]" role="group" aria-label="Défilement">
        <button type="button" aria-label="Reculer" className={`flex w-[14px] items-center justify-center border-r border-[#6f8792] ${barGrad}`}><svg width="4" height="8" viewBox="0 0 4 8" aria-hidden="true"><path d="M4 0v8L0 4z" /></svg></button>
        <div className="flex-[790] bg-linear-to-b from-[#8fb0bf] to-[#a6c3cf]" />
        <div className="flex-[693] border-x border-[#6f8792] bg-linear-to-b from-[#c0dfea] to-[#9abac8]" />
        <button type="button" aria-label="Avancer" className={`flex w-[14px] items-center justify-center ${barGrad}`}><svg width="4" height="8" viewBox="0 0 4 8" aria-hidden="true"><path d="M0 0v8l4-4z" /></svg></button>
      </div>
      <div className="flex w-[105px] items-center justify-around pl-0.5">
        <button type="button" aria-label="Ajuster"><I s={20}><circle cx="8" cy="7" r="5" fill="#b4cdd6" stroke="#7c929c" strokeWidth="1.500" /><path d="M12 11l6 7" stroke="#6e7f87" strokeWidth="3" /><path d="M17 1v10M15 3l2-2 2 2M15 9l2 2 2-2M1 17h9M3 15l-2 2 2 2M8 15l2 2-2 2" stroke="#6a72d8" /></I></button>
        {["M5 7.500h6", "M5 7.500h6M8 4.500v6"].map((d) => (
          <button key={d} type="button" aria-label={d.length > 12 ? "Zoom avant" : "Zoom arrière"}><I s={20}><path d="M12 11.500l6 7" strokeWidth="3.500" /><circle cx="8" cy="7.500" r="5.800" fill="#fff" strokeWidth="1.200" /><path d={d} stroke="#0000c8" strokeWidth="2.200" /></I></button>
        ))}
        <button type="button" aria-label="Dernière barre"><I s={20}><rect x="1" y="2.500" width="18" height="5" fill="#fff" stroke="#fff" /><path d="M2 5h16" stroke="#111" strokeWidth="3" strokeDasharray="3 1.500" /><path d="M8.500 10h3v4H14l-4 5-4-5h2.500z" fill="#1a62c8" stroke="none" /></I></button>
      </div>
    </div>
  );
}

const APPS: [string, React.ReactNode][] = [
  ["Démarrer", <I key="a" s={28}><path d="M6 7.500l7-1V14H6zM14 6.300l8-1.300v9h-8zM6 15h7v7.500l-7-1zM14 15h8v9l-8-1.300z" fill="#fff" stroke="none" /></I>],
  ["Rechercher", <I key="b" s={28}><circle cx="16" cy="11" r="7.500" stroke="#fff" strokeWidth="2" /><path d="M11 17l-7 8" stroke="#fff" strokeWidth="2.500" /></I>],
  ["Vue des tâches", <I key="c" s={28}><path d="M6 6v3.500h9V6M6 22v-3h9v3M6 12h9v5H6zM19 6v17" stroke="#eee" strokeWidth="1.400" /><path d="M17.500 10h3v3.500h-3z" fill="#eee" stroke="none" /></I>],
  ["Bureau", <I key="d" s={28}><path d="M4 4h20v17l-3-2H6l-2 2z" fill="#0f6fc0" stroke="none" /><rect x="8" y="3" width="12" height="22" rx="1" fill="#1a9cf0" stroke="#0a5ca8" /><path d="M12 6h4" stroke="#8fd4ff" /></I>],
  ["Imprimante", <I key="e" s={28}><path d="M2 10l5-1V5h11l2 6 6 2v9l-5 2-19-3z" fill="#e0e0e0" stroke="#9a9a9a" /><path d="M8 6h9l2 5-13-1z" fill="#fff" stroke="#bbb" /><path d="M3 14l22 2M7 18.500l11 1" stroke="#888" strokeWidth="1.300" /></I>],
  ["Spotify", <I key="f" s={28}><circle cx="14" cy="14" r="11.500" fill="#1ed760" stroke="none" /><path d="M7.500 10.500c5-1.500 10-1 14 1.300M8 14.500c4-1.200 8.500-.8 12 1.200M8.500 18.300c3.500-1 7-.7 10 1" stroke="#111" strokeWidth="2" strokeLinecap="round" /></I>],
  ["Word", <I key="g" s={28}><path d="M6 2h19l-1 21-20 2z" fill="#dfe9f8" stroke="#86a5d8" /><path d="M20 7h4M20 11h4M19 15h5M13 20h10" stroke="#5b84c8" /><path d="M7 4l13 1-1 13-13 1z" fill="#2b5cb0" stroke="#cfdcf2" /><text x="13" y="16" textAnchor="middle" fontSize="11" fontWeight="700" fontFamily="'Liberation Serif', serif" fill="#fff" stroke="none">W</text></I>],
  ["Explorateur", <I key="h" s={28}><path d="M3 4h9l2 2h11v18H3z" fill="#e8a82c" stroke="none" /><path d="M3 8h22v16H3z" fill="#ffd464" stroke="none" /><path d="M7 25v-9h14v9h-4v-5h-6v5z" fill="#3c94d8" stroke="none" /></I>],
  ["Calculatrice", <I key="i" s={28}><rect x="5" y="2" width="18" height="24" rx="1" fill="#7b8690" stroke="#aab" strokeWidth=".5" /><rect x="7" y="4" width="14" height="5" fill="#48c4f4" stroke="none" /><path d="M7 13h9M7 18h9M7 23h9" stroke="#e6eaec" strokeWidth="3.500" strokeDasharray="4 1" /><path d="M19.500 11v14" stroke="#1b4ca0" strokeWidth="4" /></I>],
  ["Paint", <I key="j" s={28}><path d="M13 6c7 0 12 4 11 9s-5 9-10 9c-4 0-2-4-5-5s-7 0-7-4 5-9 11-9z" fill="#c9e2f2" stroke="#7ba2bd" /><circle cx="8" cy="12" r="2" fill="#e24040" stroke="none" /><circle cx="13.500" cy="9.500" r="2" fill="#f0c020" stroke="none" /><circle cx="19" cy="12" r="1.800" fill="#38a838" stroke="none" /><circle cx="7" cy="16.500" r="1.700" fill="#3060d0" stroke="none" /><path d="M23 3l-7 20" stroke="#a8682c" strokeWidth="2.200" /><path d="M21 2l5 1-2 6-4-2z" fill="#c49a66" stroke="none" /></I>],
  ["Chrome", <I key="k" s={28}><circle cx="14" cy="14" r="11.500" fill="#fbc116" stroke="none" /><path d="M4 8.300A11.500 11.500 0 0 0 14 25.500l5-8.700-5-2.800z" fill="#2da94f" stroke="none" /><path d="M4 8.300A11.500 11.500 0 0 1 24 8.500H14v5.500L9 17z" fill="#e33b2e" stroke="none" /><circle cx="14" cy="14" r="5.500" fill="#4285f4" stroke="#fff" strokeWidth="1.600" /></I>],
  ["Application", <I key="l" s={28}><path d="M14 3L4 14l5 5.500L15 14" stroke="#1b4a9c" strokeWidth="3" /><path d="M14 25l10-11-5-5.500L13 14" stroke="#173f88" strokeWidth="3" /><path d="M15 3v8M13 25v-8" stroke="#1b4a9c" strokeWidth="3" /></I>],
  ["ProRealTime", <I key="m" s={28}><path d="M8.500 9v17" stroke="#b33" /><rect x="5" y="13" width="7" height="10" fill="#e45a5a" stroke="#b02a2a" /><path d="M19.500 1v24" stroke="#1a9a1a" /><rect x="16" y="6" width="7" height="15" fill="#4fdc4f" stroke="#1a9a1a" /></I>],
];

function TaskBar() {
  return (
    <footer className="flex h-[37px] shrink-0 items-stretch border-b border-[#555] bg-[#101010]">
      {APPS.map(([name, icon], i) => (
        <button key={name} type="button" title={name} className={`flex items-center justify-center ${i === 0 ? "w-[47px]" : "w-[49px]"} ${name === "Chrome" ? "bg-[#333]" : ""}`}>{icon}</button>
      ))}
      <time dateTime="2023-10-24T16:16" className="ml-auto flex w-[70px] flex-col items-center justify-between pt-0.5 text-xs leading-[16px] text-white">
        <span>16:16</span><span>24/10/2023</span>
      </time>
    </footer>
  );
}

export default function App() {
  return (
    <div className="flex h-screen w-full flex-col overflow-hidden bg-white font-['Liberation_Sans',Arial,sans-serif] text-[11px] text-[#111]">
      <MenuBar />
      <ToolBar />
      <SymbolBar />
      <TradeRow />
      <main className="flex min-h-0 flex-1">
        <div className="relative flex min-w-0 flex-1 flex-col border-b border-r border-[#6f8690]">
          <IndicatorBar />
          <div className="min-h-0 flex-1"><PriceChart /></div>
          <div className="absolute left-0 top-[17px] flex h-4 w-[180px] items-center whitespace-nowrap border-b border-r border-[#7b929d] pl-px">Jour :+Haut 14 741,5 +Bas 14 622,5</div>
          <PositionTag />
        </div>
        <div className="relative w-[68px] shrink-0 border-r border-[#9babb3]">
          <PriceAxis />
          <PriceTags />
        </div>
      </main>
      <TimeAxis />
      <BottomBar />
      <TaskBar />
    </div>
  );
}
